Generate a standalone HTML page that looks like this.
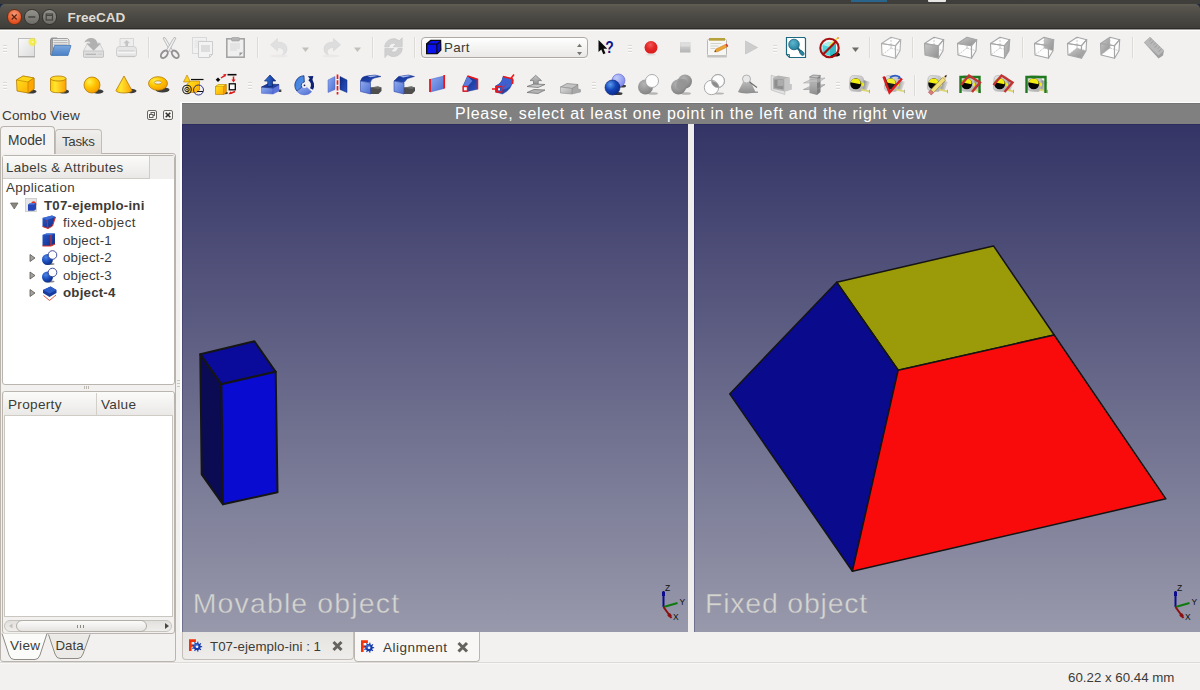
<!DOCTYPE html>
<html>
<head>
<meta charset="utf-8">
<title>FreeCAD</title>
<style>
html,body{margin:0;padding:0;}
body{width:1200px;height:690px;overflow:hidden;background:#f2f1f0;position:relative;font-family:"Liberation Sans",sans-serif;font-size:13.33px;color:#3c3b37;}
.abs{position:absolute;}
.t{position:absolute;white-space:nowrap;line-height:1;}
#topstrip{left:0;top:0;width:1200px;height:10px;background:linear-gradient(#3f3e3a 0,#3f3e3a 40%,#1c2a4a 41%);}
#titlebar{left:0;top:4px;width:1200px;height:24px;background:linear-gradient(#605e54 0,#57554d 12%,#4c4a44 50%,#3f3e3a 100%);border-top-left-radius:5px;border-top-right-radius:5px;}
.wbtn{position:absolute;width:15.5px;height:15.5px;border-radius:50%;top:9.3px;box-sizing:border-box;}
.sep{position:absolute;width:1px;background:#d6d3cf;height:22px;top:36px;}
.sep2{top:74px;}
.hdl{position:absolute;width:4px;height:9px;}
svg{position:absolute;overflow:visible;}
</style>
</head>
<body>
<!-- title bar -->
<div class="abs" id="topstrip"></div>
<div class="abs" style="left:851px;top:0;width:36px;height:2px;background:#1a7fc4;opacity:0.6"></div>
<div class="abs" style="left:928px;top:0;width:18px;height:2px;background:#e8e6e2;border-radius:0 0 1px 1px"></div>
<div class="abs" id="titlebar"></div>
<div class="abs" style="left:0;top:28px;width:1200px;height:1px;background:#2c2b27;"></div>
<div class="abs" style="left:0;top:29px;width:1200px;height:1px;background:#9d9c98;"></div>
<div class="abs" style="left:0;top:30px;width:1200px;height:1px;background:#fcfcfb;"></div>
<div class="wbtn" style="left:6.500px;background:radial-gradient(circle at 50% 30%,#f79a78,#e3501f 70%);border:1px solid #6b2d17;"></div>
<div class="wbtn" style="left:24px;background:linear-gradient(#93928c,#6e6d67);border:1px solid #34332f;"></div>
<div class="wbtn" style="left:41.500px;background:linear-gradient(#93928c,#6e6d67);border:1px solid #34332f;"></div>
<svg style="left:0;top:0" width="60" height="30" viewBox="0 0 60 30">
 <path d="M11.700 14.500 l5 5 M16.700 14.500 l-5 5" stroke="#5a2410" stroke-width="1.200"/>
 <path d="M28.300 17 h7" stroke="#45443f" stroke-width="1.500"/>
 <rect x="46.200" y="14" width="6.300" height="6" fill="none" stroke="#45443f" stroke-width="1.200"/><path d="M46.200 15.500 h6.300" stroke="#45443f" stroke-width="1"/>
</svg>
<div class="t" id="ttl" style="left:67.500px;top:10.500px;font-size:13.5px;font-weight:bold;color:#dfdbd2;">FreeCAD</div>

<!-- TOOLBARS -->
<div id="tb">
<svg id="tbsvg" style="left:0;top:0" width="1200" height="100" viewBox="0 0 1200 100">
<g id="row1"><defs>
<linearGradient id="gPage" x1="0" y1="0" x2="1" y2="1"><stop offset="0" stop-color="#fafafa"/><stop offset="1" stop-color="#dcdcdc"/></linearGradient>
<radialGradient id="gYel" cx="0.5" cy="0.5" r="0.5"><stop offset="0" stop-color="#fffbe0"/><stop offset="0.35" stop-color="#f4ec3a"/><stop offset="1" stop-color="#f4ec3a" stop-opacity="0.55"/></radialGradient>
<linearGradient id="gFold" x1="0" y1="0" x2="0" y2="1"><stop offset="0" stop-color="#7aa8de"/><stop offset="1" stop-color="#4a80c6"/></linearGradient>
<linearGradient id="gGrey" x1="0" y1="0" x2="0" y2="1"><stop offset="0" stop-color="#dcdcdc"/><stop offset="1" stop-color="#b4b4b4"/></linearGradient>
<linearGradient id="gGrey2" x1="0" y1="0" x2="0" y2="1"><stop offset="0" stop-color="#f0f0f0"/><stop offset="1" stop-color="#d2d2d2"/></linearGradient>
<linearGradient id="gCombo" x1="0" y1="0" x2="0" y2="1"><stop offset="0" stop-color="#ffffff"/><stop offset="1" stop-color="#e9e8e6"/></linearGradient>
<radialGradient id="gRed" cx="0.45" cy="0.3" r="0.7"><stop offset="0" stop-color="#f25a5a"/><stop offset="0.5" stop-color="#e32626"/><stop offset="1" stop-color="#d81c1c"/></radialGradient>
<radialGradient id="gTeal" cx="0.4" cy="0.35" r="0.7"><stop offset="0" stop-color="#5fb6cf"/><stop offset="1" stop-color="#1f7f9c"/></radialGradient>
<linearGradient id="gCubeF" x1="0" y1="0" x2="1" y2="1"><stop offset="0" stop-color="#c9c9c9"/><stop offset="1" stop-color="#8f8f8f"/></linearGradient>
</defs><rect x="3" y="45" width="4" height="1" fill="#dbd9d5"/><rect x="3" y="46" width="4" height="1" fill="#fcfcfb"/><rect x="3" y="48" width="4" height="1" fill="#dbd9d5"/><rect x="3" y="49" width="4" height="1" fill="#fcfcfb"/><rect x="3" y="51" width="4" height="1" fill="#dbd9d5"/><rect x="3" y="52" width="4" height="1" fill="#fcfcfb"/><rect x="18.500" y="38.500" width="16" height="18" fill="url(#gPage)" stroke="#bdbdbd"/><rect x="18" y="56.500" width="17" height="1" fill="#8c8c8c" opacity="0.600"/><circle cx="32.500" cy="42" r="4.200" fill="url(#gYel)"/><path d="M50.500 40 l1-2 h5.500 l1 1.500 v15.500 h-7.500z" fill="#a2a2a2" stroke="#7d7d7d" stroke-width="0.800"/><path d="M52.500 38.500 h15 l1.500 1.500 v8 h-16.500z" fill="#e9e9e9" stroke="#8f8f8f" stroke-width="0.800"/><path d="M53.500 40.500 h14 M53.500 42.500 h14 M53.500 44.300 h14" stroke="#b0b0b0" stroke-width="0.800"/><path d="M54.500 45.500 h16.500 l-3 10 h-16.500z" fill="url(#gFold)" stroke="#4a7ab8" stroke-width="0.800"/><path d="M83.500 51 l4-8 h12 l4 8 v6 h-20z" fill="#ebebeb" stroke="#c6c6c6" stroke-width="0.800" stroke-linejoin="round"/><rect x="83.500" y="51" width="20" height="6.300" rx="1" fill="#dedede" stroke="#bebebe" stroke-width="0.800"/><path d="M85.500 54.300 h10.500" stroke="#b4b4b4" stroke-width="1.300"/><path d="M97.500 54.300 h4.500" stroke="#cfcfcf" stroke-width="1.300"/><path d="M84.300 42.500 q2.500-5 7.500-4.500 q5 0.500 5.500 5.500 h3.500 l-7.200 7.300 -7.200-7.300 h4.200 q-0.500-3.500-6.300-1z" fill="#b1b1b1"/><path d="M120 47 v-8.500 h13.500 v8.500z" fill="#eeeeee" stroke="#d0d0d0" stroke-width="0.800"/><path d="M126.700 40 l3.300 3.300 h-2 v3 h-2.600 v-3 h-2z" fill="#c4c4c4"/><path d="M116.500 49.500 q0-3 3-3 h14 q3 0 3 3 v5 q0 2-2 2 h-16 q-2 0-2-2z" fill="#e6e6e6" stroke="#c8c8c8" stroke-width="0.800"/><path d="M118.500 51 h16" stroke="#c8c8c8" stroke-width="1"/><path d="M117.500 52.500 h18" stroke="#f6f6f6" stroke-width="1.600"/><path d="M118 56.500 h17" stroke="#c4c4c4" stroke-width="1.200"/><rect x="148" y="37" width="1" height="21" fill="#dddbd7"/><rect x="149" y="37" width="1" height="21" fill="#f8f7f6"/><path d="M163 38 l2-0.500 8 13.500 -2.500 1z" fill="#f0f0f0" stroke="#a6a6a6" stroke-width="0.700"/><path d="M176 38 l-2-0.500 -8 13.500 2.500 1z" fill="#f0f0f0" stroke="#a6a6a6" stroke-width="0.700"/><ellipse cx="164.300" cy="54.300" rx="4.300" ry="2.700" transform="rotate(-50 164.300 54.300)" fill="none" stroke="#939393" stroke-width="1.900"/><ellipse cx="175.300" cy="54.300" rx="4.300" ry="2.700" transform="rotate(50 175.300 54.300)" fill="none" stroke="#939393" stroke-width="1.900"/><rect x="192.500" y="37.500" width="14" height="16" fill="#f1f1f1" stroke="#d9d9d9"/><path d="M194.500 41 h10 M194.500 43 h10 M194.500 45 h10 M194.500 47 h4" stroke="#e0e0e0" stroke-width="0.800"/><path d="M198.500 41.500 h14 v13 l-3 3 h-11z" fill="#f3f3f3" stroke="#cdcdcd"/><rect x="201" y="45" width="9" height="7" fill="#dddddd"/><path d="M209.500 57.500 v-3 h3" fill="none" stroke="#cdcdcd"/><rect x="226.800" y="38.800" width="17.400" height="18.400" fill="#efefef" stroke="#a4a4a4" stroke-width="1.600"/><rect x="231.500" y="37.500" width="8" height="3.500" rx="1" fill="#b4b4b4" stroke="#9a9a9a" stroke-width="0.600"/><path d="M230 44 h10 M230 46 h10 M230 48 h10 M230 50 h7" stroke="#d8d8d8" stroke-width="1"/><path d="M239.500 56 v-3.500 h3.500z" fill="#9a9a9a"/><rect x="257" y="37" width="1" height="21" fill="#dddbd7"/><rect x="258" y="37" width="1" height="21" fill="#f8f7f6"/><path d="M277.500 38.500 v3.500 q10 0 9.500 8 q-0.500 4-4.500 5 q2.500-3 0.500-5.500 q-1.500-2-5.500-2 v3.500 l-7-6.200z" fill="#e0e0e0" stroke="#d8d8d8" stroke-width="0.600"/><ellipse cx="279" cy="56" rx="9" ry="1.500" fill="#eae9e7"/><path d="M302 47.500 h7 l-3.500 4.500z" fill="#c3c0bb"/><path d="M333.500 38.500 v3.500 q-10 0 -9.500 8 q0.500 4 4.500 5 q-2.500-3 -0.500-5.500 q1.500-2 5.500-2 v3.500 l7-6.200z" fill="#dddddd" stroke="#d5d5d5" stroke-width="0.600"/><ellipse cx="331" cy="56" rx="9" ry="1.500" fill="#eae9e7"/><path d="M354 47.500 h7 l-3.500 4.500z" fill="#c3c0bb"/><rect x="372" y="37" width="1" height="21" fill="#dddbd7"/><rect x="373" y="37" width="1" height="21" fill="#f8f7f6"/><path d="M384.700 47 a8.800 8.800 0 0 1 14.500-6.200 l3-3 v9 h-9 l2.800-2.800 a4.600 4.600 0 0 0 -7.100 3z" fill="#d2d2d2" stroke="#c6c6c6" stroke-width="0.600"/><path d="M402.300 48.300 a8.800 8.800 0 0 1 -14.500 6.200 l-3 3 v-9 h9 l-2.800 2.800 a4.600 4.600 0 0 0 7.100-3z" fill="#d0d0d0" stroke="#c4c4c4" stroke-width="0.600"/><rect x="414" y="37" width="1" height="21" fill="#dddbd7"/><rect x="415" y="37" width="1" height="21" fill="#f8f7f6"/><rect x="421.500" y="37.500" width="166" height="20" rx="3.500" fill="url(#gCombo)" stroke="#aeaaa3"/><rect x="421" y="58" width="167" height="1" fill="#fbfbfa"/><path d="M426 43.500 l4.500-3.700 h10.700 l0.300 10.500 -4 4 h-11.500z" fill="#0a0a0a"/><rect x="427.300" y="44.600" width="9" height="8.600" fill="#0c12ee"/><path d="M428 43.400 l3.200-2.500 h8.600 l-2.800 2.500z" fill="#0c12ee"/><path d="M437.500 44.700 l2.800-2.800 v8 l-2.800 3z" fill="#0a10d0"/><path d="M577 47 h5 l-2.500-3.200z M577 52 h5 l-2.500 3.200z" fill="#77756f"/><path d="M598.500 40 v12 l2.800-2.500 2 4.800 2.200-1 -2-4.600 h3.800z" fill="#0a0a0a"/><text x="605.300" y="52.600" font-family="Liberation Sans, sans-serif" font-weight="bold" font-size="16.500" fill="#14148c" textLength="8.500" lengthAdjust="spacingAndGlyphs">?</text><rect x="628" y="45" width="4" height="1" fill="#dbd9d5"/><rect x="628" y="46" width="4" height="1" fill="#fcfcfb"/><rect x="628" y="48" width="4" height="1" fill="#dbd9d5"/><rect x="628" y="49" width="4" height="1" fill="#fcfcfb"/><rect x="628" y="51" width="4" height="1" fill="#dbd9d5"/><rect x="628" y="52" width="4" height="1" fill="#fcfcfb"/><circle cx="651" cy="47.500" r="6.500" fill="url(#gRed)"/><ellipse cx="651" cy="54.500" rx="5" ry="1" fill="#e0dfdd"/><rect x="680" y="42" width="10.500" height="10.500" fill="url(#gGrey)"/><rect x="680.500" y="42.500" width="9.500" height="4" fill="#dedede"/><rect x="707.500" y="39.500" width="19" height="16" rx="1" fill="#f6f6f4" stroke="#b9b9b4"/><rect x="707" y="55" width="20" height="2.500" rx="1" fill="#c4c4c0"/><rect x="709" y="38" width="16" height="2.600" fill="#a8922a"/><path d="M710 38 v2.600 M712 38 v2.600 M714 38 v2.600 M716 38 v2.600 M718 38 v2.600 M720 38 v2.600 M722 38 v2.600 M724 38 v2.600" stroke="#d9c766" stroke-width="0.600"/><path d="M710.500 43.500 h11 M710.500 46 h8 M710.500 48.500 h5" stroke="#cfcfca" stroke-width="0.900"/><path d="M714.500 51.800 l1.500-2.800 9.500-4.600 1.600 2.600 -9.500 4.700z" fill="#eda436" stroke="#b9771a" stroke-width="0.500"/><path d="M725.500 44.400 l1.400-0.700 1.500 2.600 -1.300 0.700z" fill="#dc3030"/><path d="M714.500 51.800 l0.800-1.500 0.900 1.200z" fill="#222"/><path d="M745.500 41 l12 6.500 -12 6.500z" fill="#cdcdcd" stroke="#bdbdbd" stroke-width="0.600"/><rect x="773" y="45" width="4" height="1" fill="#dbd9d5"/><rect x="773" y="46" width="4" height="1" fill="#fcfcfb"/><rect x="773" y="48" width="4" height="1" fill="#dbd9d5"/><rect x="773" y="49" width="4" height="1" fill="#fcfcfb"/><rect x="773" y="51" width="4" height="1" fill="#dbd9d5"/><rect x="773" y="52" width="4" height="1" fill="#fcfcfb"/><path d="M786.500 37.500 h18 l1 1 v19 h-16 l-3-3z" fill="#ffffff" stroke="#1d6982" stroke-width="1.200"/><path d="M786.500 54.500 h3 v3" fill="none" stroke="#1d6982" stroke-width="0.900"/><path d="M797.500 48 l4 4.500" stroke="#1d6982" stroke-width="2.200"/><ellipse cx="801.800" cy="53" rx="2.800" ry="1.700" transform="rotate(48 801.800 53)" fill="#2a86a2" stroke="#1a6079" stroke-width="0.700"/><circle cx="794" cy="44.500" r="5.300" fill="url(#gTeal)" stroke="#1a6079" stroke-width="0.800"/><ellipse cx="835" cy="54.500" rx="5" ry="2" fill="#111"/><path d="M822.500 45 l6-3 7.500 2 v8.500 l-6 3.500 -7.500-2.500z" fill="#4fd4dc"/><path d="M822.500 45 l6-3 7.500 2 -6 3z" fill="#a6f0f2"/><path d="M830 47 l6-3 v8.500 l-6 3.500z" fill="#35b9c4"/><path d="M829 46 l8-7.500" stroke="#f0de30" stroke-width="1.600"/><circle cx="838" cy="38" r="0.900" fill="#e88d2a"/><circle cx="829.500" cy="48" r="9.200" fill="none" stroke="#a50f0f" stroke-width="2.100"/><path d="M823 54.500 l13-13" stroke="#a50f0f" stroke-width="2.100"/><path d="M852 47.500 h7 l-3.500 4.500z" fill="#6e6c67"/><rect x="869" y="37" width="1" height="21" fill="#dddbd7"/><rect x="870" y="37" width="1" height="21" fill="#f8f7f6"/><polygon points="881.5,43.5 891,37.3 900.7,39.7 900,50.7 895.5,58.2 882,55" fill="#fdfdfd" stroke="none"/><path d="M891,48 L891,37.3 M891,48 L882,55 M891,48 L900,50.7" stroke="#bdbdbd" stroke-width="0.800" stroke-dasharray="2 1" fill="none"/><polygon points="881.5,43.5 895.5,45.7 895.5,58.2 882,55" fill="none" stroke="#b0b0b0" stroke-width="1.100" stroke-linejoin="round"/><polygon points="881.5,43.5 895.5,45.7 900.7,39.7 891,37.3" fill="none" stroke="#b0b0b0" stroke-width="1.100" stroke-linejoin="round"/><polygon points="895.5,45.7 900.7,39.7 900,50.7 895.5,58.2" fill="none" stroke="#b0b0b0" stroke-width="1.100" stroke-linejoin="round"/><rect x="912" y="37" width="1" height="21" fill="#dddbd7"/><rect x="913" y="37" width="1" height="21" fill="#f8f7f6"/><polygon points="924.5,43.5 934,37.3 943.7,39.7 943,50.7 938.5,58.2 925,55" fill="#fdfdfd" stroke="none"/><path d="M934,48 L934,37.3 M934,48 L925,55 M934,48 L943,50.7" stroke="#bdbdbd" stroke-width="0.800" stroke-dasharray="2 1" fill="none"/><polygon points="924.5,43.5 938.5,45.7 938.5,58.2 925,55" fill="url(#gCubeF)" stroke="none"/><polygon points="924.5,43.5 938.5,45.7 938.5,58.2 925,55" fill="none" stroke="#a6a6a6" stroke-width="1.100" stroke-linejoin="round"/><polygon points="924.5,43.5 938.5,45.7 943.7,39.7 934,37.3" fill="none" stroke="#a6a6a6" stroke-width="1.100" stroke-linejoin="round"/><polygon points="938.5,45.7 943.7,39.7 943,50.7 938.5,58.2" fill="none" stroke="#a6a6a6" stroke-width="1.100" stroke-linejoin="round"/><polygon points="957.5,43.5 967,37.3 976.7,39.7 976,50.7 971.5,58.2 958,55" fill="#fdfdfd" stroke="none"/><path d="M967,48 L967,37.3 M967,48 L958,55 M967,48 L976,50.7" stroke="#bdbdbd" stroke-width="0.800" stroke-dasharray="2 1" fill="none"/><polygon points="957.5,43.5 971.5,45.7 976.7,39.7 967,37.3" fill="url(#gCubeF)" stroke="none"/><polygon points="957.5,43.5 971.5,45.7 971.5,58.2 958,55" fill="none" stroke="#a6a6a6" stroke-width="1.100" stroke-linejoin="round"/><polygon points="957.5,43.5 971.5,45.7 976.7,39.7 967,37.3" fill="none" stroke="#a6a6a6" stroke-width="1.100" stroke-linejoin="round"/><polygon points="971.5,45.7 976.7,39.7 976,50.7 971.5,58.2" fill="none" stroke="#a6a6a6" stroke-width="1.100" stroke-linejoin="round"/><polygon points="990.5,43.5 1000,37.3 1009.7,39.7 1009,50.7 1004.5,58.2 991,55" fill="#fdfdfd" stroke="none"/><path d="M1000,48 L1000,37.3 M1000,48 L991,55 M1000,48 L1009,50.7" stroke="#bdbdbd" stroke-width="0.800" stroke-dasharray="2 1" fill="none"/><polygon points="1004.5,45.7 1009.7,39.7 1009,50.7 1004.5,58.2" fill="url(#gCubeF)" stroke="none"/><polygon points="990.5,43.5 1004.5,45.7 1004.5,58.2 991,55" fill="none" stroke="#a6a6a6" stroke-width="1.100" stroke-linejoin="round"/><polygon points="990.5,43.5 1004.5,45.7 1009.7,39.7 1000,37.3" fill="none" stroke="#a6a6a6" stroke-width="1.100" stroke-linejoin="round"/><polygon points="1004.5,45.7 1009.7,39.7 1009,50.7 1004.5,58.2" fill="none" stroke="#a6a6a6" stroke-width="1.100" stroke-linejoin="round"/><rect x="1022" y="37" width="1" height="21" fill="#dddbd7"/><rect x="1023" y="37" width="1" height="21" fill="#f8f7f6"/><polygon points="1034.5,43.5 1044,37.3 1053.7,39.7 1053,50.7 1048.5,58.2 1035,55" fill="#fdfdfd" stroke="none"/><polygon points="1044,37.3 1053.7,39.7 1053,50.7 1044,48" fill="url(#gCubeF)" stroke="none"/><path d="M1044,48 L1044,37.3 M1044,48 L1035,55 M1044,48 L1053,50.7" stroke="#bdbdbd" stroke-width="0.800" stroke-dasharray="2 1" fill="none"/><polygon points="1034.5,43.5 1048.5,45.7 1048.5,58.2 1035,55" fill="none" stroke="#a6a6a6" stroke-width="1.100" stroke-linejoin="round"/><polygon points="1034.5,43.5 1048.5,45.7 1053.7,39.7 1044,37.3" fill="none" stroke="#a6a6a6" stroke-width="1.100" stroke-linejoin="round"/><polygon points="1048.5,45.7 1053.7,39.7 1053,50.7 1048.5,58.2" fill="none" stroke="#a6a6a6" stroke-width="1.100" stroke-linejoin="round"/><polygon points="1067.5,43.5 1077,37.3 1086.7,39.7 1086,50.7 1081.5,58.2 1068,55" fill="#fdfdfd" stroke="none"/><polygon points="1068,55 1081.5,58.2 1086,50.7 1077,48" fill="url(#gCubeF)" stroke="none"/><path d="M1077,48 L1077,37.3 M1077,48 L1068,55 M1077,48 L1086,50.7" stroke="#bdbdbd" stroke-width="0.800" stroke-dasharray="2 1" fill="none"/><polygon points="1067.5,43.5 1081.5,45.7 1081.5,58.2 1068,55" fill="none" stroke="#a6a6a6" stroke-width="1.100" stroke-linejoin="round"/><polygon points="1067.5,43.5 1081.5,45.7 1086.7,39.7 1077,37.3" fill="none" stroke="#a6a6a6" stroke-width="1.100" stroke-linejoin="round"/><polygon points="1081.5,45.7 1086.7,39.7 1086,50.7 1081.5,58.2" fill="none" stroke="#a6a6a6" stroke-width="1.100" stroke-linejoin="round"/><polygon points="1100.5,43.5 1110,37.3 1119.7,39.7 1119,50.7 1114.5,58.2 1101,55" fill="#fdfdfd" stroke="none"/><polygon points="1100.5,43.5 1110,37.3 1110,48 1101,55" fill="url(#gCubeF)" stroke="none"/><path d="M1110,48 L1110,37.3 M1110,48 L1101,55 M1110,48 L1119,50.7" stroke="#bdbdbd" stroke-width="0.800" stroke-dasharray="2 1" fill="none"/><polygon points="1100.5,43.5 1114.5,45.7 1114.5,58.2 1101,55" fill="none" stroke="#a6a6a6" stroke-width="1.100" stroke-linejoin="round"/><polygon points="1100.5,43.5 1114.5,45.7 1119.7,39.7 1110,37.3" fill="none" stroke="#a6a6a6" stroke-width="1.100" stroke-linejoin="round"/><polygon points="1114.5,45.7 1119.7,39.7 1119,50.7 1114.5,58.2" fill="none" stroke="#a6a6a6" stroke-width="1.100" stroke-linejoin="round"/><rect x="1132" y="37" width="1" height="21" fill="#dddbd7"/><rect x="1133" y="37" width="1" height="21" fill="#f8f7f6"/><path d="M1144 42.500 l6-5.500 14 13.500 -1 5 -4.500 3z" fill="#9f9f9f"/><path d="M1144 42.500 l6-5.500 14 13.500 -5.500 5z" fill="#b9b9b9"/><path d="M1151.500 39 l-2 1.800 M1153.500 41 l-3 2.700 M1155.500 43 l-2 1.800 M1157.500 45 l-3 2.700 M1159.500 47 l-2 1.800 M1161.500 49 l-3 2.700" stroke="#8a8a8a" stroke-width="0.700"/></g>
<g id="row2"><defs>
<linearGradient id="gO1" x1="0" y1="0" x2="1" y2="1"><stop offset="0" stop-color="#ffe51f"/><stop offset="1" stop-color="#ffa500"/></linearGradient>
<linearGradient id="gO2" x1="0" y1="0" x2="1" y2="0"><stop offset="0" stop-color="#ffc400"/><stop offset="0.3" stop-color="#ffe630"/><stop offset="1" stop-color="#ff9f00"/></linearGradient>
<radialGradient id="gO3" cx="0.35" cy="0.3" r="0.75"><stop offset="0" stop-color="#fff04a"/><stop offset="0.5" stop-color="#ffc400"/><stop offset="1" stop-color="#f79a00"/></radialGradient>
<linearGradient id="gB1" x1="0" y1="0" x2="0" y2="1"><stop offset="0" stop-color="#7c9cec"/><stop offset="1" stop-color="#3c5cc0"/></linearGradient>
<linearGradient id="gB2" x1="0" y1="0" x2="1" y2="1"><stop offset="0" stop-color="#0c2a86"/><stop offset="1" stop-color="#2c54c4"/></linearGradient>
<linearGradient id="gB3" x1="0" y1="0" x2="1" y2="1"><stop offset="0" stop-color="#90acf0"/><stop offset="1" stop-color="#4c6cd0"/></linearGradient>
<radialGradient id="gSB" cx="0.35" cy="0.3" r="0.75"><stop offset="0" stop-color="#5c9cf0"/><stop offset="0.5" stop-color="#1446b8"/><stop offset="1" stop-color="#0a2a8a"/></radialGradient>
<radialGradient id="gSL" cx="0.35" cy="0.3" r="0.75"><stop offset="0" stop-color="#c0ccf8"/><stop offset="1" stop-color="#7c88ec"/></radialGradient>
<radialGradient id="gSG" cx="0.4" cy="0.3" r="0.8"><stop offset="0" stop-color="#b4b4b4"/><stop offset="1" stop-color="#7c7c7c"/></radialGradient>
<linearGradient id="gG1" x1="0" y1="0" x2="0" y2="1"><stop offset="0" stop-color="#c4c4c4"/><stop offset="1" stop-color="#8c8c8c"/></linearGradient>
<linearGradient id="gExA" x1="0" y1="0" x2="1" y2="0"><stop offset="0" stop-color="#3c7cdc"/><stop offset="1" stop-color="#0c2c8c"/></linearGradient>
<linearGradient id="gRv1" x1="0" y1="0" x2="1" y2="1"><stop offset="0" stop-color="#3c7cdc"/><stop offset="0.6" stop-color="#4c8ce4"/><stop offset="1" stop-color="#143ca0"/></linearGradient>
<linearGradient id="gTpS" x1="0" y1="0" x2="1" y2="0.3"><stop offset="0" stop-color="#555"/><stop offset="1" stop-color="#888" stop-opacity="0.150"/></linearGradient>
<linearGradient id="gTpB" x1="0" y1="0" x2="1" y2="1"><stop offset="0" stop-color="#e6e6e6"/><stop offset="1" stop-color="#a9a9a9"/></linearGradient>
<linearGradient id="gG2" x1="0" y1="0" x2="1" y2="1"><stop offset="0" stop-color="#dcdcdc"/><stop offset="1" stop-color="#a8a8a8"/></linearGradient>
<g id="tape">
 <path d="M13 5.500 l8 2.500 -3.500 9 -5-1z" fill="url(#gTpS)"/>
 <rect x="0.700" y="1.700" width="13.600" height="15.600" rx="4" fill="url(#gTpB)" stroke="#b4b4b4" stroke-width="0.700" transform="rotate(4 7 9)"/>
 <circle cx="6.700" cy="9.800" r="5.500" fill="#060606"/>
 <path d="M1.400 8.300 a5.500 5.500 0 0 1 10.300 -0.300 l-0.300 2.300z" fill="#f2ee12"/>
 <ellipse cx="14" cy="10.500" rx="1" ry="2.100" fill="#f2ee12"/>
 <path d="M12.500 14.800 l8 1.700 v1.800 l-8.300-1.700z" fill="#dcd46c"/><path d="M20 15.800 h1 v3.400 h-1z" fill="#b0b0a0"/>
</g>
</defs><rect x="3" y="82" width="4" height="1" fill="#dbd9d5"/><rect x="3" y="83" width="4" height="1" fill="#fcfcfb"/><rect x="3" y="85" width="4" height="1" fill="#dbd9d5"/><rect x="3" y="86" width="4" height="1" fill="#fcfcfb"/><rect x="3" y="88" width="4" height="1" fill="#dbd9d5"/><rect x="3" y="89" width="4" height="1" fill="#fcfcfb"/><ellipse cx="31" cy="91.5" rx="5.5" ry="2" fill="#1c1c1c" opacity="0.850"/><path d="M16.500 80 l6.500-4 11 2 v11 l-6 4 -11-2z" fill="url(#gO1)" stroke="#b27b00" stroke-width="0.800" stroke-linejoin="round"/><path d="M16.500 80 l6.500-4 11 2 -6 4z" fill="#ffd61a" stroke="#b27b00" stroke-width="0.600"/><path d="M28 82 l6-4 v11 l-6 4z" fill="#ffa600" stroke="#b27b00" stroke-width="0.600"/><ellipse cx="64" cy="91.5" rx="5" ry="2" fill="#1c1c1c" opacity="0.850"/><path d="M50.500 78.500 v12 a7.800 2.500 0 0 0 15.500 0 v-12z" fill="url(#gO2)" stroke="#b27b00" stroke-width="0.800"/><ellipse cx="58.250" cy="78.500" rx="7.750" ry="2.500" fill="#ffd829" stroke="#b27b00" stroke-width="0.800"/><ellipse cx="98" cy="91.5" rx="5.5" ry="2.2" fill="#1c1c1c" opacity="0.850"/><circle cx="92" cy="85" r="8" fill="url(#gO3)" stroke="#b27b00" stroke-width="0.800"/><ellipse cx="131" cy="91" rx="5.5" ry="2.2" fill="#1c1c1c" opacity="0.850"/><path d="M124 76 l-8 14.500 a8 2.500 0 0 0 16 0z" fill="url(#gO2)" stroke="#b27b00" stroke-width="0.800" stroke-linejoin="round"/><ellipse cx="162.5" cy="89.8" rx="7" ry="2.6" fill="#1c1c1c" opacity="0.850"/><ellipse cx="158" cy="83.500" rx="9.500" ry="6.800" fill="url(#gO3)" stroke="#b27b00" stroke-width="0.800"/><ellipse cx="158" cy="82.500" rx="3.800" ry="1.700" fill="#f4f0e4" stroke="#b27b00" stroke-width="0.700"/><path d="M187 75 l-3.500 7 h7z" fill="#ffd21a" stroke="#b27b00" stroke-width="0.600"/><path d="M187 84 l4-3 h8.500 v9 l-3 2.500 h-9.500z" fill="url(#gO1)" stroke="#b27b00" stroke-width="0.600"/><path d="M191 79.500 h12.500" stroke="#111" stroke-width="1.200"/><path d="M197 91.500 h6" stroke="#111" stroke-width="1"/><circle cx="187" cy="89.500" r="4.300" fill="none" stroke="#222" stroke-width="1.100"/><circle cx="187" cy="89.500" r="2.200" fill="none" stroke="#222" stroke-width="1"/><circle cx="187" cy="89.500" r="0.700" fill="#222"/><circle cx="198.500" cy="90" r="5" fill="none" stroke="#1c1c7c" stroke-width="0.900"/><ellipse cx="225" cy="93" rx="3" ry="1.2" fill="#1c1c1c" opacity="0.850"/><path d="M215.500 86.500 l3-1.900 h7.700 v7.700 l-2.700 2.200 h-8z" fill="url(#gO1)" stroke="#b27b00" stroke-width="0.600"/><path d="M215.500 86.500 l3-1.900 h7.700 l-2.700 1.900z" fill="#ffe23a" stroke="#b27b00" stroke-width="0.400"/><path d="M223.500 86.500 l2.700-1.900 v7.700 l-2.700 2.200z" fill="#f79a00" stroke="#b27b00" stroke-width="0.400"/><path d="M218 77.500 l2.300 2.300 -2.300 2.300 -2.300-2.300z" fill="#0a0a0a"/><path d="M221 78 l4-2.700" stroke="#e01818" stroke-width="1.500"/><path d="M226.500 74 l-3.300 0.300 1.800 2.600z" fill="#e01818"/><path d="M227.500 74.700 h9" stroke="#0a0a0a" stroke-width="1.600"/><path d="M233.500 76.500 v4" stroke="#e01818" stroke-width="1.500"/><path d="M233.500 82.500 l-2-3 h4z" fill="#e01818"/><rect x="229.300" y="83.800" width="6" height="6" fill="#fafafa" stroke="#0a0a0a" stroke-width="1.300"/><path d="M235 91.500 l-4 1.800" stroke="#e01818" stroke-width="1.500"/><path d="M228.500 94.200 l3.300-0.200 -1.300-2.700z" fill="#e01818"/><rect x="248" y="82" width="4" height="1" fill="#dbd9d5"/><rect x="248" y="83" width="4" height="1" fill="#fcfcfb"/><rect x="248" y="85" width="4" height="1" fill="#dbd9d5"/><rect x="248" y="86" width="4" height="1" fill="#fcfcfb"/><rect x="248" y="88" width="4" height="1" fill="#dbd9d5"/><rect x="248" y="89" width="4" height="1" fill="#fcfcfb"/><path d="M279 89.500 h2.300 v2.500 h-2.600z" fill="#45453c"/><path d="M261.500 87 l11.500 1 v6 l-11.500-0.700z" fill="url(#gB3)" stroke="#4c5cd0" stroke-width="0.500"/><path d="M273 88 l6-3.500 v6.500 l-6 3z" fill="#5c74d8" stroke="#4c5cd0" stroke-width="0.500"/><path d="M261.500 87 l6-3 11.500 0.500 -6 3.500z" fill="url(#gB2)" stroke="#10246c" stroke-width="0.600"/><path d="M270 75 l5.700 6 h-3.200 v5.500 h-4.700 v-5.500 h-3.300z" fill="url(#gExA)" stroke="#0c2470" stroke-width="0.700" stroke-linejoin="round"/><path d="M304.00 75.71 A9.6 9.6 0 0 0 296.94 91.21 L301.98 87.27 A3.2 3.2 0 0 1 304.33 82.10 Z" fill="url(#gRv1)" stroke="#0c2470" stroke-width="0.700"/><path d="M297.37 91.72 A9.6 9.6 0 0 0 311.63 91.72 L306.88 87.44 A3.2 3.2 0 0 1 302.12 87.44 Z" fill="url(#gB3)" stroke="#5c6cd4" stroke-width="0.500"/><path d="M312.98 89.81 A9.6 9.6 0 0 0 310.41 77.74 L308.38 80.34 A6.3 6.3 0 0 1 310.06 88.26 Z" fill="#0c2274"/><path d="M307.800 76.300 l5.600-0.300 -1.400 5.200z" fill="#0c2274"/><circle cx="304.500" cy="85.300" r="0.900" fill="#0c1c5c"/><path d="M328 80 l7-3.500 v13 l-7 3z" fill="url(#gB3)" stroke="#4c64c4" stroke-width="0.500"/><path d="M340 76.500 l7 3.500 v12.500 l-7-3z" fill="url(#gB2)" stroke="#0c2470" stroke-width="0.500"/><path d="M337.500 74.500 v20" stroke="#f01414" stroke-width="1.700" stroke-dasharray="4.500 1.300"/><path d="M370 87.500 l8-1 3.500 1 v3.500 l-3 3 h-8.500z" fill="#4e4e4e"/><path d="M370 87.500 l8-1 3.500 1 -3 1.500z" fill="#6a6a6a"/><path d="M360.5 81 q1-4.500 5.500-5 l9-1 6 1.500 -6.500 1.500 q-3.500 0.500 -4 4.500z" fill="url(#gB2)" stroke="#1c3490" stroke-width="0.500"/><path d="M367.5 76.300 l7-1 3 0.800 -7 1.200z" fill="#a4b8f0"/><path d="M360.5 81 l10 2 v11 l-10-2.500z" fill="url(#gB3)" stroke="#2c44a4" stroke-width="0.600"/><path d="M403.5 87.500 l8-1 3.500 1 v3.500 l-3 3 h-8.500z" fill="#4e4e4e"/><path d="M403.5 87.500 l8-1 3.500 1 -3 1.500z" fill="#6a6a6a"/><path d="M394 81 l4.500-4.500 10-1.500 6 1.500 -7 2 -3.500 4z" fill="url(#gB2)" stroke="#1c3490" stroke-width="0.500"/><path d="M400 76.500 l8-1.200 3 0.800 -8 1.400z" fill="#a4b8f0"/><path d="M394 81 l10 2 v11 l-10-2.500z" fill="url(#gB3)" stroke="#2c44a4" stroke-width="0.600"/><path d="M430 79.500 l14-3.500 v12.500 l-14 3.500z" fill="url(#gB3)" stroke="#3c58c0" stroke-width="0.500"/><path d="M430 79 v13 M444.200 75 v13.500" stroke="#f01414" stroke-width="1.700"/><path d="M467.500 76 l10 3.200 v10 l-10 2.300 h-4.500 v-5.500z" fill="url(#gB2)" stroke="#1c3490" stroke-width="0.400"/><path d="M467.500 76 l5 5 -5 5.500 h-4.500z" fill="#5c7cdc"/><path d="M467.500 76 l10 3.200 v10" fill="none" stroke="#f01414" stroke-width="1.500"/><rect x="463.200" y="86.500" width="4.300" height="4.600" fill="#f4f4fc" stroke="#f01414" stroke-width="1.400"/><path d="M503 76.500 l10 2.500 q-1 11-10.500 15 l-7-2 v-6 q6.500-2.500 7.500-9.500z" fill="url(#gB2)" stroke="#1c3490" stroke-width="0.400"/><path d="M503 76.500 l10 2.500 q-0.500 4-2.500 7.500 q-5 3.500 -8.500 3 l-6.500-3.500 q6.500-2.500 7.500-9.500z" fill="#3c60d0"/><path d="M503 76.500 l10 2.500 M510.500 79 l3.500-4.500 M513 79.500 l-0.500 4.500" stroke="#f01414" stroke-width="1.500" fill="none"/><path d="M506 84 q-2 4-6 5.500" stroke="#f01414" stroke-width="0.800" fill="none" stroke-dasharray="2 1"/><rect x="496.200" y="86.500" width="5.500" height="5.500" fill="#3050c0" stroke="#f01414" stroke-width="1.400"/><path d="M492 89 h6" stroke="#f01414" stroke-width="1.500"/><rect x="498" y="88.300" width="2" height="2" fill="#f4f4fc"/><path d="M535.700 75.300 l5.800 5.300 h-3.300 v5 h-4.700 v-5 h-3.500z" fill="url(#gG1)" stroke="#727272" stroke-width="0.700" stroke-linejoin="round"/><path d="M527 86.500 l7-2.500 11 0.500 -7 3z" fill="#c8c8c8" stroke="#767676" stroke-width="0.800" stroke-linejoin="round"/><path d="M527 92.500 l7-3 11 0.500 -7 3.500z" fill="#b4b4b4" stroke="#767676" stroke-width="0.800" stroke-linejoin="round"/><polygon points="572,88.500 578,84.500 578,89 580.500,89.500 580.500,92 572,94" fill="#a8a8a8" stroke="#8c8c8c" stroke-width="0.500"/><polygon points="560.500,87 567,83.500 578,84.500 572,88.500" fill="#c4c4c4" stroke="#868686" stroke-width="0.700" stroke-linejoin="round"/><polygon points="560.500,87 572,88.500 572,94 560.500,93" fill="url(#gG2)" stroke="#909090" stroke-width="0.600" stroke-linejoin="round"/><rect x="592" y="82" width="4" height="1" fill="#dbd9d5"/><rect x="592" y="83" width="4" height="1" fill="#fcfcfb"/><rect x="592" y="85" width="4" height="1" fill="#dbd9d5"/><rect x="592" y="86" width="4" height="1" fill="#fcfcfb"/><rect x="592" y="88" width="4" height="1" fill="#dbd9d5"/><rect x="592" y="89" width="4" height="1" fill="#fcfcfb"/><ellipse cx="622" cy="86" rx="4" ry="1.5" fill="#1c1c1c" opacity="0.850"/><ellipse cx="618" cy="93.5" rx="4.5" ry="1.5" fill="#1c1c1c" opacity="0.850"/><circle cx="618.500" cy="80.500" r="6.500" fill="url(#gSL)" stroke="#6c6cdc" stroke-width="0.700"/><circle cx="612.500" cy="87.500" r="7.500" fill="url(#gSB)" stroke="#0c1c6c" stroke-width="0.600"/><ellipse cx="653" cy="93.500" rx="5" ry="1.300" fill="#9c9c9c" opacity="0.700"/><circle cx="645.500" cy="87" r="7.500" fill="url(#gSG)"/><circle cx="652" cy="81" r="6.500" fill="#fdfdfd" stroke="#a4a4a4" stroke-width="0.900"/><ellipse cx="686" cy="93.500" rx="5" ry="1.300" fill="#9c9c9c" opacity="0.700"/><ellipse cx="681.800" cy="84.200" rx="9" ry="6.300" transform="rotate(-40 681.800 84.200)" fill="#8e8e8e"/><circle cx="685" cy="81.500" r="7" fill="url(#gSG)"/><circle cx="678.500" cy="87" r="7.500" fill="url(#gSG)"/><ellipse cx="681.800" cy="84.200" rx="6" ry="5" transform="rotate(-40 681.800 84.200)" fill="#949494" opacity="0.800"/><ellipse cx="719" cy="93.500" rx="5" ry="1" fill="#9c9c9c" opacity="0.700"/><circle cx="718" cy="81" r="6.500" fill="#fcfcfc" stroke="#a8a8a8" stroke-width="0.900"/><circle cx="711.500" cy="87.500" r="7.200" fill="#fcfcfc" stroke="#a0a0a0" stroke-width="0.900"/><path d="M711.500 81 a7.200 7.200 0 0 1 7.300 6.500 a6.500 6.500 0 0 1 -7.300 -6.500z" fill="#8c8c8c"/><circle cx="718" cy="81" r="6.500" fill="none" stroke="#a8a8a8" stroke-width="0.900"/><path d="M752 91.500 h6 v1.500 h-6z" fill="#9c9c9c"/><path d="M744.500 79 l-6.500 13 a9.500 2.300 0 0 0 17.500 0 l-6-13z" fill="url(#gG1)"/><circle cx="746.500" cy="79" r="4" fill="#e8e8e8" stroke="#b0b0b0" stroke-width="1"/><path d="M749.500 82 l7.500 5.500" stroke="#6c6c6c" stroke-width="1.100"/><polygon points="771.200,75.300 784.800,79.500 784.800,94.500 771.200,90" fill="#d4d4d4" fill-opacity="0.500" stroke="#b4b4b4" stroke-width="0.600"/><polygon points="773,78 778,75.500 789.500,77.500 789.500,84 791.500,84 791.500,89.500 785,91.500 773,89" fill="#b4b4b4"/><polygon points="784.500,78.500 789.500,77.500 789.500,84 791.500,84 791.500,89.500 784.500,91.500" fill="#c6c6c6"/><polygon points="774.300,79.500 783.500,79.500 783.500,89.500 774.300,88" fill="#8e8e8e"/><polygon points="777.500,80 783.300,80 783.300,86 777.500,86" fill="#adadad"/><path d="M777.500 86 l-3 2 M777.500 80 v6 h5.800" stroke="#9c9c9c" stroke-width="0.500" fill="none"/><polygon points="803.500,89.500 811,86 825,84.500 818,89" fill="#b0b0b0" fill-opacity="0.700" stroke="#a0a0a0" stroke-width="0.600"/><polygon points="809.500,77 817,78 817,95 809.500,93" fill="url(#gG1)"/><polygon points="817,78 820.500,75.500 820.500,92 817,95" fill="#7e7e7e"/><polygon points="809.500,77 813,75 820.500,75.500 817,78" fill="#c4c4c4" stroke="#7c7c7c" stroke-width="0.700"/><polygon points="803.500,83 811,79.500 825,78 818,82.500" fill="#c0c0c0" fill-opacity="0.600" stroke="#a4a4a4" stroke-width="0.600"/><path d="M803.500 89.500 l14.500-0.500 7-4.500" stroke="#a0a0a0" stroke-width="0.600" fill="none"/><rect x="836" y="82" width="4" height="1" fill="#dbd9d5"/><rect x="836" y="83" width="4" height="1" fill="#fcfcfb"/><rect x="836" y="85" width="4" height="1" fill="#dbd9d5"/><rect x="836" y="86" width="4" height="1" fill="#fcfcfb"/><rect x="836" y="88" width="4" height="1" fill="#dbd9d5"/><rect x="836" y="89" width="4" height="1" fill="#fcfcfb"/><use href="#tape" x="849" y="74"/><use href="#tape" x="884" y="74" opacity="0.900"/><path d="M890 77.500 q5-3.500 9.500-0.500" stroke="#2c5cc4" stroke-width="1.800" fill="none"/><path d="M901.500 79 l-4-0.300 2.200-3z" fill="#2c5cc4"/><path d="M883.500 76.500 l6 16 12.500-14" stroke="#e01c1c" stroke-width="2.400" fill="none" stroke-linejoin="miter"/><path d="M885 77 l5 13" stroke="#4c1010" stroke-width="0.700"/><rect x="914" y="75" width="1" height="21" fill="#dddbd7"/><rect x="915" y="75" width="1" height="21" fill="#f8f7f6"/><use href="#tape" x="927" y="74"/><path d="M930.500 90 l12-12.500 3 2.700 -12 12.500z" fill="#f0e07c" stroke="#8c7c2c" stroke-width="0.600"/><path d="M942.500 77.500 l4-2.500 -1 5.200z" fill="#e8c894"/><path d="M944.300 76.300 l2.400-1.600 -0.600 2.900z" fill="#111"/><path d="M930.500 90 l3 2.700 -2.200 2.300 -3-2.700z" fill="#dc7c7c" stroke="#9c4c4c" stroke-width="0.500"/><use href="#tape" x="960" y="74"/><path d="M960.500 93 v-16 h19 v16" stroke="#1f7a1f" stroke-width="2.400" fill="none"/><path d="M961 85 l8-9.500 11 7 -8 9.500" stroke="#c23434" stroke-width="2.400" fill="none"/><use href="#tape" x="993" y="74"/><path d="M993.500 85 l8-9.500 11 7 -8 9.500" stroke="#c23434" stroke-width="2.400" fill="none"/><use href="#tape" x="1027" y="74"/><path d="M1026.500 93 v-16 h19 v16" stroke="#1f7a1f" stroke-width="2.400" fill="none"/></g>
</svg>
<div class="t" style="left:444px;top:41.300px;font-size:13.4px;letter-spacing:0.3px;">Part</div>
</div>

<!-- COMBO VIEW -->
<div id="combo">
<div class="t" style="left:2px;top:109px;font-size:13.6px;letter-spacing:0.1px;">Combo View</div>
<svg style="left:147px;top:110px" width="26" height="10" viewBox="0 0 26 10">
 <rect x="0.5" y="0.5" width="9" height="9" rx="1.5" fill="#f7f6f5" stroke="#6a6862"/>
 <rect x="4" y="2.5" width="3.5" height="3" fill="none" stroke="#55534e" stroke-width="0.9"/>
 <rect x="2.5" y="4.5" width="3.5" height="3" fill="#f7f6f5" stroke="#55534e" stroke-width="0.9"/>
 <rect x="16.5" y="0.5" width="9" height="9" rx="1.5" fill="#f7f6f5" stroke="#6a6862"/>
 <path d="M18.7 2.7 L23.3 7.3 M23.3 2.7 L18.7 7.3" stroke="#33322e" stroke-width="1.6"/>
</svg>
<!-- tab pane -->
<div class="abs" style="left:0px;top:153px;width:176px;height:509px;border:1px solid #b9b5ae;border-radius:0 3px 3px 3px;box-sizing:border-box;background:#f2f1f0;"></div>
<div class="abs" style="left:55px;top:129px;width:47px;height:25px;border:1px solid #c2beb7;border-bottom:none;border-radius:4px 4px 0 0;box-sizing:border-box;background:linear-gradient(#f0efed,#e2dfdb);"></div>
<div class="abs" style="left:0px;top:126px;width:55px;height:28px;border:1px solid #b9b5ae;border-bottom:none;border-radius:4px 4px 0 0;box-sizing:border-box;background:#f5f4f3;"></div>
<div class="abs" style="left:1px;top:153px;width:53px;height:1px;background:#f3f2f1;"></div>
<div class="t" style="left:8px;top:134px;font-size:13.8px;">Model</div>
<div class="t" style="left:62px;top:134.500px;font-size:13.3px;letter-spacing:-0.3px;">Tasks</div>
<!-- tree -->
<div class="abs" style="left:2px;top:155px;width:173px;height:230px;border:1px solid #bab6af;border-radius:3px;box-sizing:border-box;background:#fff;"></div>
<div class="abs" style="left:3px;top:156px;width:171px;height:23px;background:#f0efee;"></div>
<div class="abs" style="left:3px;top:156px;width:147px;height:23px;background:linear-gradient(#fbfbfa,#e9e8e6);border-right:1px solid #cfccc6;border-bottom:1px solid #cfccc6;box-sizing:border-box;"></div>
<div class="t" style="left:6px;top:161px;font-size:13.3px;letter-spacing:0.35px;">Labels &amp; Attributes</div>
<div class="t" style="left:6px;top:181px;font-size:13.3px;letter-spacing:0.35px;">Application</div>
<div class="t" style="left:44px;top:199px;font-size:13.3px;font-weight:bold;letter-spacing:0.2px;">T07-ejemplo-ini</div>
<div class="t" style="left:63px;top:216px;font-size:13.3px;letter-spacing:0.4px;">fixed-object</div>
<div class="t" style="left:63px;top:234px;font-size:13.3px;letter-spacing:0.2px;">object-1</div>
<div class="t" style="left:63px;top:251px;font-size:13.3px;letter-spacing:0.2px;">object-2</div>
<div class="t" style="left:63px;top:269px;font-size:13.3px;letter-spacing:0.2px;">object-3</div>
<div class="t" style="left:63px;top:286px;font-size:13.3px;font-weight:bold;letter-spacing:0.2px;">object-4</div>
<svg style="left:0;top:195px" width="62" height="110" viewBox="0 0 62 110">
 <defs><radialGradient id="gTS" cx="0.35" cy="0.3" r="0.8"><stop offset="0" stop-color="#4a86e8"/><stop offset="0.55" stop-color="#1848b4"/><stop offset="1" stop-color="#0c2a80"/></radialGradient>
 <linearGradient id="gTB" x1="0" y1="0" x2="1" y2="1"><stop offset="0" stop-color="#2c58c8"/><stop offset="1" stop-color="#0c2a86"/></linearGradient></defs>
 <path d="M10.500 8 h7.500 l-3.750 6z" fill="#8a8882" stroke="#5f5d58" stroke-width="0.700"/>
 <path d="M30 59.500 v7 l5-3.500z M30 77 v7 l5-3.500z M30 94.500 v7 l5-3.500z" fill="#a3a19b" stroke="#5a5853" stroke-width="0.800"/>
 <!-- doc icon -->
 <rect x="25.500" y="3.500" width="11" height="13" fill="#e6e6e6" stroke="#c8c8c8" stroke-width="0.800"/>
 <path d="M31 8.500 a2.700 3 0 0 1 5.200 0 v1.500 h-5.200z" fill="#e0301e"/>
 <path d="M28 9.500 l2-1.300 h6 v6 l-2 1.500 h-6z" fill="#2444b8"/><path d="M28 9.500 l2-1.300 h6 l-2 1.300z" fill="#5c80e0"/>
 <!-- fixed-object -->
 <path d="M42.500 23 l9.500-2.500 3.500 1.500 -3 9 -4.500 2.500 -5.500-2z" fill="url(#gTB)"/><path d="M42.500 23 l9.500-2.500 3.500 1.500 -8.500 3z" fill="#3c6cd8"/>
 <path d="M42.500 31.500 l5.500 2 4.500-2.500 3-9" fill="none" stroke="#e0301e" stroke-width="1"/><path d="M47 25 l1 8.500" stroke="#e0301e" stroke-width="0.800"/>
 <!-- object-1 -->
 <path d="M42.500 40 l4-1.500 h8.500 v10.500 l-4 2 h-8.500z" fill="url(#gTB)"/><path d="M42.500 40 l4-1.500 h8.500 l-4 1.500z" fill="#3c6cd8"/>
 <path d="M42.500 51 h8.500 l4-2 M51 40 v11" stroke="#e0301e" stroke-width="1.100" fill="none"/>
 <!-- object-2 -->
 <ellipse cx="50" cy="69" rx="4.500" ry="1" fill="#555" opacity="0.700"/>
 <circle cx="47.500" cy="64.500" r="5.500" fill="url(#gTS)"/><circle cx="52.500" cy="60" r="4.300" fill="#fdfdfd" stroke="#2c3c94" stroke-width="0.900"/>
 <!-- object-3 -->
 <ellipse cx="50" cy="86.500" rx="4.500" ry="1" fill="#555" opacity="0.700"/>
 <circle cx="47.500" cy="82" r="5.500" fill="url(#gTS)"/><circle cx="52.500" cy="77.500" r="4.300" fill="#fdfdfd" stroke="#2c3c94" stroke-width="0.900"/>
 <!-- object-4 -->
 <path d="M43.500 100.500 l6 5 6.500-5.500" stroke="#e0402c" stroke-width="0.900" fill="none"/>
 <path d="M43 95 l7.500-3.500 6 3.500 v3 l-7 4 -6.500-4z" fill="#1a3c9c"/><path d="M43 95 l7.500-3.500 6 3.500 -7 3.500z" fill="#2c5cc8"/>
</svg>
<!-- splitter -->
<div class="abs" style="left:84px;top:386px;width:1px;height:3px;background:#bdb9b2;box-shadow:2px 0 0 #bdb9b2,4px 0 0 #bdb9b2;"></div>
<!-- property -->
<div class="abs" style="left:2px;top:391px;width:173px;height:243px;border:1px solid #bab6af;border-radius:3px;box-sizing:border-box;background:#f2f1f0;"></div>
<div class="abs" style="left:4px;top:393px;width:169px;height:224px;background:#fff;border:1px solid #c9c6c0;box-sizing:border-box;border-top:none"></div>
<div class="abs" style="left:4px;top:392px;width:169px;height:24px;background:linear-gradient(#fbfbfa,#eae9e7);border-bottom:1px solid #cfccc6;box-sizing:border-box;"></div>
<div class="abs" style="left:96px;top:393px;width:1px;height:22px;background:#d3d0ca;"></div>
<div class="t" style="left:8px;top:398px;font-size:13.6px;letter-spacing:0.3px;">Property</div>
<div class="t" style="left:101px;top:398px;font-size:13.6px;letter-spacing:0.3px;">Value</div>
<!-- scrollbar -->
<div class="abs" style="left:4px;top:620px;width:168px;height:12px;border:1px solid #c6c3bd;border-radius:6px;box-sizing:border-box;background:linear-gradient(#e3e1de,#efeeec);"></div>
<div class="abs" style="left:16px;top:620px;width:131px;height:12px;border:1px solid #b1aea7;border-radius:6px;box-sizing:border-box;background:linear-gradient(#fbfbfa,#e6e4e1);"></div>
<div class="abs" style="left:77px;top:625px;width:1px;height:3px;background:#8d8a84;box-shadow:3px 0 0 #8d8a84,6px 0 0 #8d8a84;"></div>
<svg style="left:4px;top:620px" width="168" height="12" viewBox="0 0 168 12"><path d="M8.500 3.500 v5 l-3.500-2.500z" fill="#c5c2bc"/><path d="M161 3 v6 l4-3z" fill="#4a4843"/></svg>
<!-- bottom tabs -->
<svg style="left:0;top:632px" width="100" height="30" viewBox="0 0 100 30">
 <path d="M48.500 2.500 L55 22 Q56.500 26.500 60 26.500 L78 26.500 Q81.500 26.500 83 22 L90 2.500" fill="#eceae7" stroke="#8f8c86"/>
 <path d="M2 1.500 L9 23 Q10.500 27.500 14 27.500 L35 27.500 Q38.500 27.500 40 23 L47 1.500" fill="#fbfbfa" stroke="#8f8c86"/>
</svg>
<div class="t" style="left:10px;top:639px;font-size:13.6px;letter-spacing:0.3px;">View</div>
<div class="t" style="left:55.500px;top:638.500px;font-size:13.3px;">Data</div>
</div>

<div class="abs" style="left:177px;top:380px;width:4px;height:1px;background:#c9c6c0;box-shadow:0 3px 0 #c9c6c0,0 6px 0 #c9c6c0;"></div>
<!-- 3D VIEW -->
<div id="view">
<div class="abs" style="left:180px;top:102px;width:1020px;height:530px;background:#fdfdfd;"></div>
<div class="abs" style="left:182px;top:103px;width:1018px;height:21px;background:#808080;border-top:1px solid #747474;box-sizing:border-box;"></div>
<div class="t" id="msg" style="left:455px;top:106px;font-size:16px;letter-spacing:0.74px;color:#fff;">Please, select at least one point in the left and the right view</div>
<div class="abs" style="left:182px;top:124px;width:506px;height:508px;background:linear-gradient(#343466,#9899ab);box-shadow:inset 1px 1px 0 rgba(24,24,84,0.3);"></div>
<div class="abs" style="left:694px;top:124px;width:506px;height:508px;background:linear-gradient(#343466,#9899ab);box-shadow:inset 1px 1px 0 rgba(24,24,84,0.3);"></div>
<div class="abs" style="left:688px;top:124px;width:6px;height:508px;background:#efeeed;"></div>
<svg style="left:0;top:0" width="1200" height="690" viewBox="0 0 1200 690">
 <g stroke="#151515" stroke-width="2" stroke-linejoin="round">
  <polygon points="200.300,354.300 254.400,341.200 275.700,371.800 221.400,384.300" fill="#0a0b9b"/>
  <polygon points="200.300,354.300 221.400,384.300 223,504.300 201.700,474.300" fill="#0b0b54"/>
  <polygon points="221.400,384.300 275.700,371.800 277.500,492.300 223,504.300" fill="#0a0bd0"/>
 </g>
 <g stroke="#141414" stroke-width="1.500" stroke-linejoin="round">
  <polygon points="836.700,282.200 993.500,245.900 1054.200,335 898.200,370.200" fill="#9b9b0a"/>
  <polygon points="836.700,282.200 898.200,370.200 852.400,571.200 729.700,393.900" fill="#0a0a8c"/>
  <polygon points="898.200,370.200 1054.200,335 1165.900,498.800 852.400,571.200" fill="#f90b0b"/>
 </g>
 <g id="ax1" fill="none" stroke-width="2">
  <path d="M663.500 607 V591" stroke="#0c0c8c"/><path d="M663.500 607 L677.500 603" stroke="#0c7a0c"/><path d="M663.500 607 L671.500 618" stroke="#8c1010"/>
  <path d="M663.500 596 V592" stroke="#0c0c8c" stroke-width="3"/><path d="M668.500 614 l2 2.500" stroke="#8c1010" stroke-width="3.500"/>
 </g>
 <g id="ax2" fill="none" stroke-width="2" transform="translate(512,0)">
  <path d="M663.500 607 V591" stroke="#0c0c8c"/><path d="M663.500 607 L677.500 603" stroke="#0c7a0c"/><path d="M663.500 607 L671.500 618" stroke="#8c1010"/>
  <path d="M663.500 596 V592" stroke="#0c0c8c" stroke-width="3"/><path d="M668.500 614 l2 2.500" stroke="#8c1010" stroke-width="3.500"/>
 </g>
 <g font-family="Liberation Sans, sans-serif" font-size="8.500" fill="#111">
  <text x="665" y="590.500">Z</text><text x="679.500" y="604.500">Y</text><text x="673" y="619.500">X</text>
  <text x="1177" y="590.500">Z</text><text x="1191.500" y="604.500">Y</text><text x="1185" y="619.500">X</text>
 </g>
</svg>
<div class="t" style="left:192.700px;top:588.500px;font-size:28.5px;letter-spacing:1.13px;color:#d6d6d1;-webkit-text-stroke:0.4px #9192a6;">Movable object</div>
<div class="t" style="left:705px;top:588.500px;font-size:28.5px;letter-spacing:0.78px;color:#d6d6d1;-webkit-text-stroke:0.4px #9192a6;">Fixed object</div>
<!-- mdi tabs -->
<div class="abs" style="left:182px;top:632px;width:172px;height:28px;border:1px solid #c4c0b9;border-top:none;border-radius:0 0 4px 4px;box-sizing:border-box;background:linear-gradient(#e6e4e0,#efedeb);"></div>
<div class="abs" style="left:354px;top:632px;width:126px;height:30px;border:1px solid #bab6af;border-top:none;border-radius:0 0 4px 4px;box-sizing:border-box;background:#f8f7f6;"></div>
<div class="t" style="left:210px;top:640px;font-size:13.3px;letter-spacing:0.05px;">T07-ejemplo-ini : 1</div>
<div class="t" style="left:383px;top:641px;font-size:13.5px;letter-spacing:0.5px;">Alignment</div>
<svg style="left:0;top:632px" width="500" height="30" viewBox="0 0 500 30">
 <g id="fcico">
  <path d="M189 7.300 h6.900 v2.600 h-4.300 v2.500 h3 v2.300 h-3 v4.300 h-2.600z" fill="#ee3408"/>
  <path d="M200.65 14.09 L202.17 14.19 L202.17 15.21 L200.65 15.31 L200.21 16.51 L201.31 17.57 L200.66 18.35 L199.43 17.45 L198.32 18.09 L198.48 19.61 L197.48 19.79 L197.12 18.30 L195.85 18.08 L195.00 19.35 L194.12 18.84 L194.80 17.47 L193.97 16.49 L192.51 16.91 L192.16 15.96 L193.56 15.34 L193.56 14.06 L192.16 13.44 L192.51 12.49 L193.97 12.91 L194.80 11.93 L194.12 10.56 L195.00 10.05 L195.85 11.32 L197.12 11.10 L197.48 9.61 L198.48 9.79 L198.32 11.31 L199.43 11.95 L200.66 11.05 L201.31 11.83 L200.21 12.89Z" fill="#1638a8"/>
  <circle cx="196.300" cy="13.800" r="2.300" fill="#3f78e0" opacity="0.700"/>
  <circle cx="197.100" cy="14.700" r="1.300" fill="#f4f4fa"/>
 </g>
 <use href="#fcico" x="172" y="1"/>
 <path d="M333.500 10 l8 8 M341.500 10 l-8 8" stroke="#65635e" stroke-width="3"/>
 <path d="M458.500 11 l8.500 8.500 M467 11 l-8.500 8.500" stroke="#65635e" stroke-width="3"/>
</svg>
</div>

<!-- STATUS -->
<div id="status">
<div class="abs" style="left:0;top:662px;width:1200px;height:1px;background:#dddbd8;"></div>
<div class="abs" style="left:0;top:663px;width:1200px;height:1px;background:#f8f7f6;"></div>
<div class="t" style="left:1068px;top:671px;font-size:13.3px;">60.22 x 60.44 mm</div>
</div>
</body>
</html>
